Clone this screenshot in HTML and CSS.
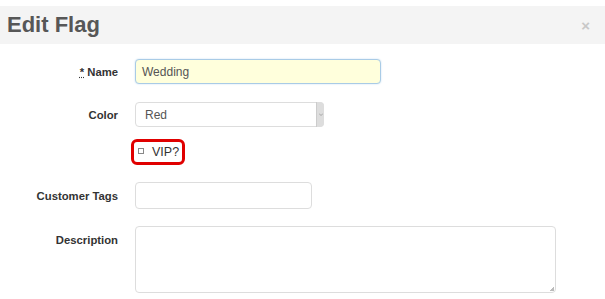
FILE: index.html
```html
<!doctype html>
<html lang="en">
<head>
    <title>Edit Flag</title>
    <link rel="stylesheet" href="styles.css">
</head>
<body>

    <!-- header -->
    <div class="Header">
        <h1>Edit Flag</h1>
        <span class="Close">&times;</span>
    </div>

    <div class="Form">

        <div class="Row RowName">
            <label><abbr title="required">*</abbr> Name</label>
            <div class="Field NameField">Wedding</div>
        </div>

        <div class="Row RowColor">
            <label>Color</label>
            <div class="Field Select">
                <span>Red</span>
                <span class="Arrow"><svg width="4" height="3" viewBox="0 0 4 3"><path d="M0 0.5 L2 2.5 L4 0.5" fill="none" stroke="#999" stroke-width="0.8"/></svg></span>
            </div>
        </div>

        <div class="Row RowVip">
            <label></label>
            <div class="Highlight">
                <span class="Check"></span>
                <span>VIP?</span>
            </div>
        </div>

        <div class="Row RowTags">
            <label>Customer Tags</label>
            <div class="Field Tags"></div>
        </div>

        <div class="Row RowDesc">
            <label>Description</label>
            <div class="Field Textarea"><span class="Grip"></span></div>
        </div>

    </div>

</body>
</html>
```

FILE: styles.css
```css
*, *:before, *:after {
    box-sizing: border-box;
    margin: 0;
    padding: 0;
}

* {
    font-family: "Liberation Sans", Arial, sans-serif;
}

body {
    background: #fff;
    color: #333;
    font-size: 12px;
}

.Header {
    display: flex;
    align-items: center;
    justify-content: space-between;
    height: 38px;
    margin-top: 6px;
    padding: 0 15px 0 7px;
    background: #f4f4f4;
}

.Header h1 {
    font-size: 22px;
    font-weight: bold;
    color: #575757;
}

.Close {
    color: #c8c8c8;
    font-size: 15px;
    font-weight: bold;
}

.Form {
    padding-top: 15px;
}

.Row {
    display: flex;
    align-items: flex-start;
}

.Row label {
    flex: 0 0 118px;
    margin-right: 17px;
    text-align: right;
    font-size: 11.3px;
    font-weight: bold;
    color: #333;
}

abbr {
    text-decoration: underline dotted;
}

.Field {
    height: 25px;
    border: 1px solid #ddd;
    border-radius: 4px;
    background: #fff;
}

.RowName label, .RowColor label {
    padding-top: 7px;
}

.NameField {
    width: 246px;
    padding: 5px 6px;
    border-color: #a9cbe6;
    background: #ffffdc;
    box-shadow: 0 0 2px #c6def2;
    color: #555;
}

.RowColor {
    margin-top: 18px;
}

.Select {
    display: flex;
    justify-content: space-between;
    width: 189px;
    padding-left: 9px;
    color: #555;
}

.Select span:first-child {
    padding-top: 5px;
}

.Arrow {
    display: flex;
    align-items: center;
    justify-content: center;
    width: 8px;
    margin: -1px -1px -1px 0;
    border-left: 1px solid #ccc;
    border-radius: 0 4px 4px 0;
    background: #ddd;
}

.RowVip {
    margin-top: 12px;
}

.RowVip label {
    flex-basis: 114px;
}

.Highlight {
    display: flex;
    align-items: center;
    width: 54px;
    height: 26px;
    padding-left: 4px;
    border: 3px solid #e00000;
    border-radius: 6px;
    color: #333;
    font-size: 12.5px;
}

.Check {
    width: 6px;
    height: 6px;
    margin: -3px 8px 0 0;
    border: 1px solid #888;
}

.RowTags {
    margin-top: 17px;
}

.RowTags label {
    padding-top: 8px;
}

.Tags {
    width: 177px;
    height: 27px;
}

.RowDesc {
    margin-top: 17px;
}

.RowDesc label {
    padding-top: 8px;
}

.Textarea {
    position: relative;
    width: 421px;
    height: 67px;
}

.Grip {
    position: absolute;
    right: 1px;
    bottom: 1px;
    width: 4px;
    height: 4px;
    background: linear-gradient(135deg, transparent 50%, #bbb 50%);
}
```
